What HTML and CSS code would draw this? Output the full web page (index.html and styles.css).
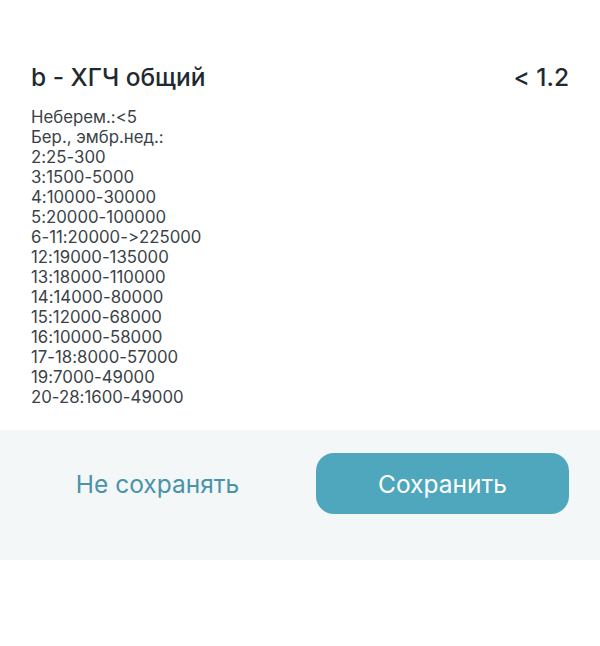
FILE: index.html
```html
<!DOCTYPE html>
<html lang="ru">
<head>
    <meta charset="UTF-8">
    <meta name="viewport" content="width=device-width, initial-scale=1.0">
    <title>ХГЧ общий</title>
    <link rel="stylesheet" href="styles.css">
</head>
<body>
    <div class="result">
        <div class="result-head">
            <h2>b - ХГЧ общий</h2>
            <span class="norm">&lt; 1.2</span>
        </div>

        <div class="ranges">
            <p>Неберем.:&lt;5</p>
            <p>Бер., эмбр.нед.:</p>
            <p>2:25-300</p>
            <p>3:1500-5000</p>
            <p>4:10000-30000</p>
            <p>5:20000-100000</p>
            <p>6-11:20000-&gt;225000</p>
            <p>12:19000-135000</p>
            <p>13:18000-110000</p>
            <p>14:14000-80000</p>
            <p>15:12000-68000</p>
            <p>16:10000-58000</p>
            <p>17-18:8000-57000</p>
            <p>19:7000-49000</p>
            <p>20-28:1600-49000</p>
        </div>
    </div>

    <div class="actions">
        <button class="btn-link">Не сохранять</button>
        <button class="btn-save">Сохранить</button>
    </div>
</body>
</html>
```

FILE: styles.css
```css
body {
    font-family: Inter, "Noto Sans", sans-serif;
    font-feature-settings: "calt" 0;
    margin: 0;
    padding: 0;
    background-color: #fff;
    color: #2b3338;
}

.result {
    padding: 62px 31px 23px;
}

.result-head {
    display: flex;
    justify-content: space-between;
    align-items: center;
    height: 30px;
    margin-bottom: 15px;
}

.result-head h2 {
    margin: 0;
    font-size: 24.5px;
    font-weight: 500;
    color: #1f2a30;
}

.norm {
    font-size: 24.5px;
    font-weight: 500;
    color: #1f2a30;
}

.ranges p {
    margin: 0;
    font-size: 16.8px;
    line-height: 20px;
    color: #3a4247;
}

.actions {
    display: grid;
    grid-template-columns: 1fr 1fr;
    gap: 32px;
    padding: 23px 31px 46px;
    background-color: #f3f7f8;
}

.actions button {
    height: 61px;
    border: none;
    font-family: inherit;
    font-feature-settings: "calt" 0;
    font-size: 24.5px;
    cursor: pointer;
}

.btn-link {
    background: none;
    color: #4a93a8;
}

.btn-save {
    background-color: #4ea7bd;
    color: #fff;
    border-radius: 18px;
}
```
